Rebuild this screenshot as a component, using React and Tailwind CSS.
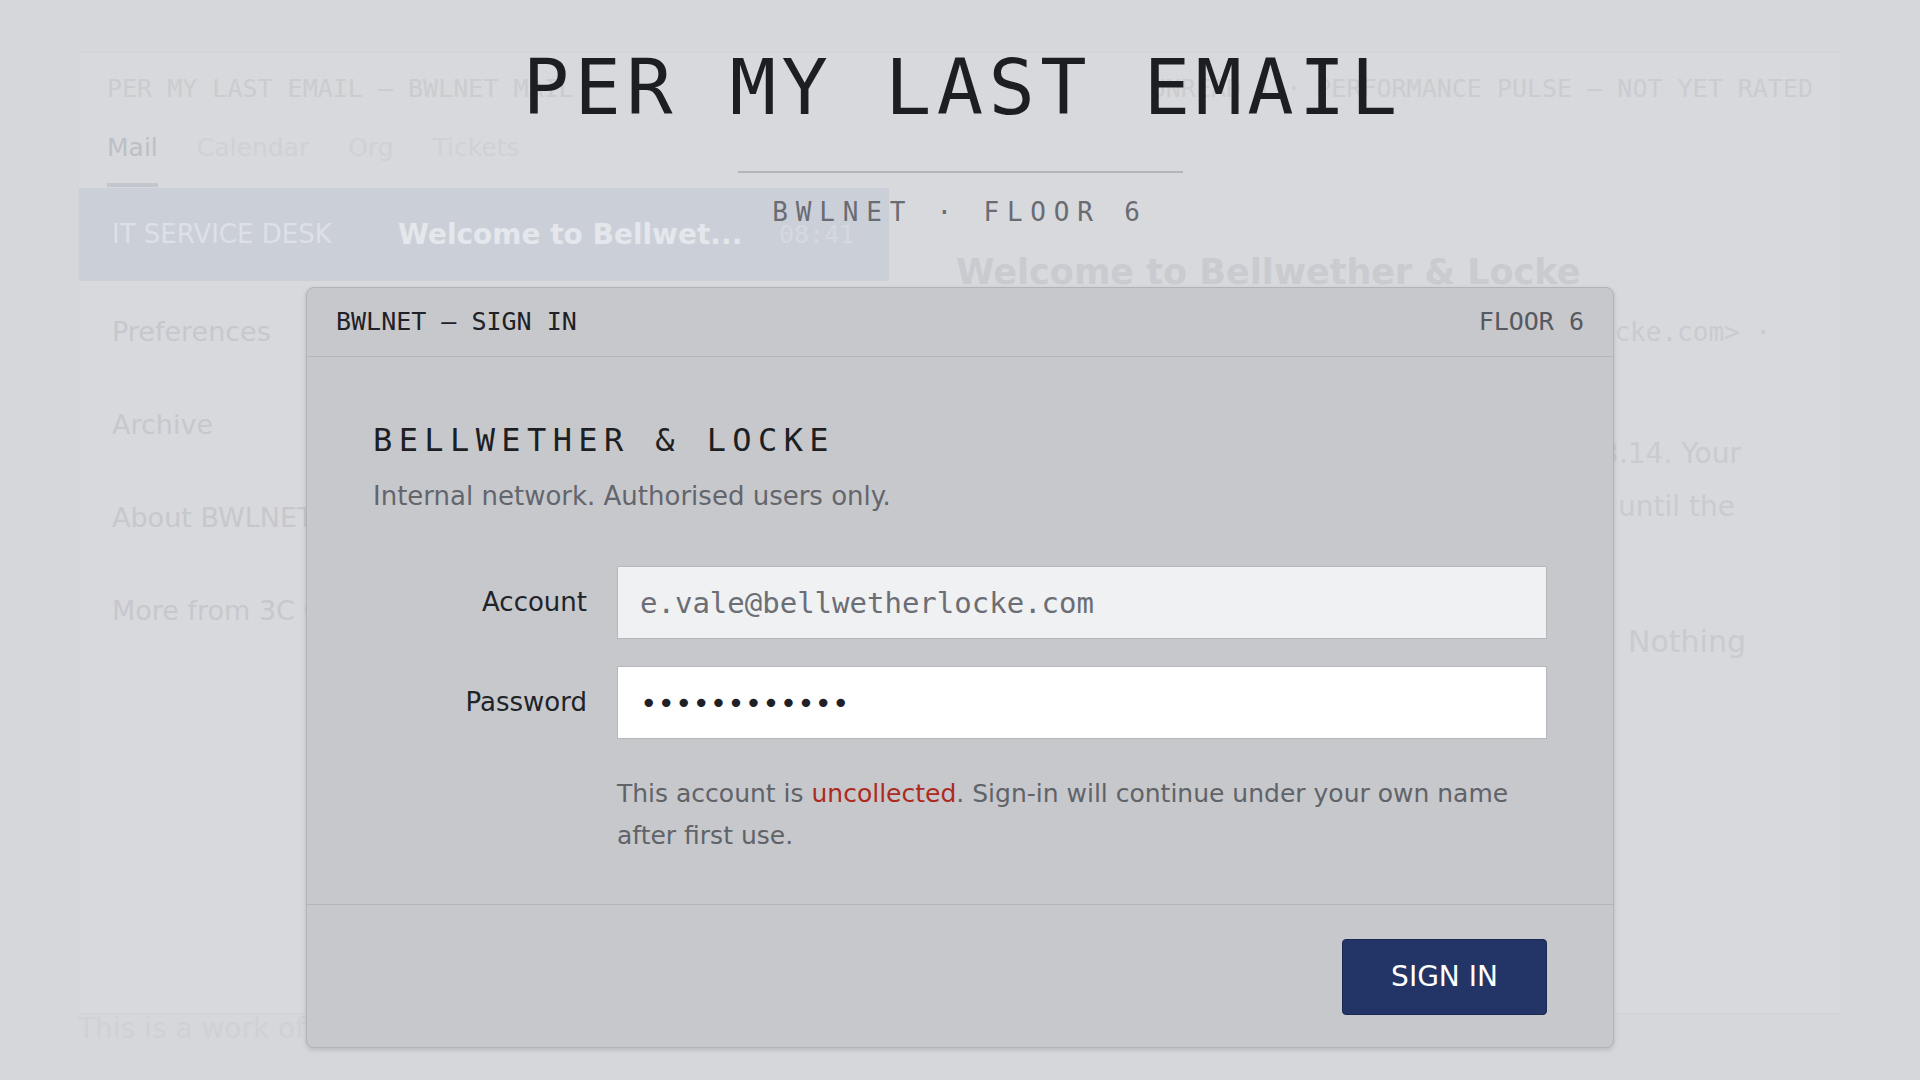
import React from 'react'

const mono = "font-['DejaVu_Sans_Mono',monospace]"
const sans = "font-['DejaVu_Sans',sans-serif]"

function Backdrop() {
  const tabs = ['Mail', 'Calendar', 'Org', 'Tickets']
  const folders = ['Preferences', 'Archive', 'About BWLNET', 'More from 3C Group']

  return (
    <div className="px-[78px] pt-[52px]">
      {/* App window, faded behind the dialog */}
      <div className="flex h-[962px] w-[1764px] flex-col border border-[#d3d4d8] bg-[#d8d9dd]">
        <header className="h-[135px] px-[28px] pt-[21px]">
          <div className={`flex items-center justify-between text-[25px] leading-[30px] text-[#cacccf] ${mono}`}>
            <span>PER MY LAST EMAIL — BWLNET MAIL</span>
            <span>UNREAD 1 · PERFORMANCE PULSE — NOT YET RATED</span>
          </div>
          <nav className={`mt-[29px] flex gap-[39px] text-[25px] leading-[30px] ${sans}`}>
            {tabs.map((t, i) => (
              <span
                key={t}
                className={
                  i === 0
                    ? 'border-b-[4px] border-[#c3c6cc] pb-[20px] text-[#bcbfc5]'
                    : 'pb-[24px] text-[#cfd1d5]'
                }
              >
                {t}
              </span>
            ))}
          </nav>
        </header>

        <div className="flex flex-1">
          {/* Message list */}
          <div className="w-[810px]">
            <div className="flex h-[93px] items-center bg-[#cbd0d8] pl-[33px]">
              <span className={`w-[286px] text-[26px] text-[#dde0e6] ${sans}`}>IT SERVICE DESK</span>
              <span className={`w-[381px] text-[28px] font-bold text-[#e4e7eb] ${sans}`}>Welcome to Bellwet...</span>
              <span className={`text-[25px] text-[#d5d9df] ${mono}`}>08:41</span>
            </div>
            <div className="pt-[5px]">
              {folders.map((f) => (
                <div key={f} className={`flex h-[93px] items-center pl-[33px] text-[27px] text-[#c6c8cd] ${sans}`}>
                  {f}
                </div>
              ))}
            </div>
          </div>

          {/* Reading pane */}
          <div className={`flex-1 pl-[67px] pt-[63px] ${sans}`}>
            <h2 className="text-[35px] font-bold leading-[42px] text-[#c9cbd0]">Welcome to Bellwether &amp; Locke</h2>
            <div className={`mt-[24px] w-[815px] text-right text-[26px] leading-[30px] text-[#c9cbd0] ${mono}`}>
              IT Service Desk &lt;servicedesk@bellwetherlocke.com&gt; ·
            </div>
            <div className="mt-[80px] text-[28px] leading-[53px] text-[#c9cbd0]">
              <div className="w-[785px] text-right">Your account was provisioned on 2024.03.14. Your</div>
              <div className="w-[779px] text-right">mailbox will stay in read-only mode until the</div>
              <div>first sign-in is complete.</div>
              <div className="mt-[29px] w-[790px] text-right">
                Keep this message for your records.{' '}
                <span className="ml-[6px] text-[30px]">Nothing</span>
              </div>
            </div>
          </div>
        </div>
      </div>
      <p className={`-mt-[1px] text-[28px] leading-[32px] text-[#cfd1d5] ${sans}`}>
        This is a work of fiction. Any resemblance to a real employer is intended.
      </p>
    </div>
  )
}

function SignInDialog() {
  return (
    <div className="mt-[62px] w-[1308px] overflow-hidden rounded-[8px] border border-[#b1b3b8] bg-[#c7c8cc] shadow-[0_2px_5px_rgba(0,0,0,0.14)]">
      <div className={`flex h-[69px] items-center justify-between border-b border-[#b4b6bb] px-[29px] text-[25px] ${mono}`}>
        <span className="text-[#1f2126]">BWLNET — SIGN IN</span>
        <span className="text-[#56595f]">FLOOR 6</span>
      </div>

      <div className="px-[66px] pt-[65px] pb-[47px]">
        <h3 className={`text-[32px] leading-[37px] tracking-[0.2em] text-[#1d1f24] ${mono}`}>BELLWETHER &amp; LOCKE</h3>
        <p className={`mt-[18px] text-[26px] leading-[39px] text-[#63666c] ${sans}`}>
          Internal network. Authorised users only.
        </p>

        <div className="mt-[50px] grid grid-cols-[214px_1fr] items-center gap-x-[30px] gap-y-[27px]">
          <label className={`text-right text-[26px] text-[#202328] ${sans}`}>Account</label>
          <input
            readOnly
            value="e.vale@bellwetherlocke.com"
            className={`h-[73px] w-full border border-[#b5b7bc] bg-[#f0f1f3] pl-[22px] text-[29px] text-[#6b6e75] outline-none ${mono}`}
          />
          <label className={`text-right text-[26px] text-[#202328] ${sans}`}>Password</label>
          <input
            readOnly
            type="password"
            value="bellwether14"
            className={`h-[73px] w-full border border-[#b5b7bc] bg-white pl-[22px] text-[29px] text-[#1f2126] outline-none ${mono}`}
          />
          <p className={`col-start-2 mt-[7px] text-[25px] leading-[42px] text-[#606368] ${sans}`}>
            This account is <span className="text-[#ad2a1f]">uncollected</span>. Sign-in will continue under your own name after first use.
          </p>
        </div>
      </div>

      <div className="flex justify-end border-t border-[#b4b6bb] px-[66px] pt-[34px] pb-[32px]">
        <button className={`h-[76px] w-[205px] rounded-[4px] border border-[#1b2a55] bg-[#233566] text-[28px] text-white ${sans}`}>
          SIGN IN
        </button>
      </div>
    </div>
  )
}

export default function App() {
  return (
    <div className="relative h-[1080px] overflow-hidden bg-[#d6d7db]">
      <Backdrop />

      {/* Overlay: title and dialog */}
      <div className="absolute inset-0 flex flex-col items-center pt-[49px]">
        <h1 className={`pl-[0.07em] text-[77px] leading-[77px] tracking-[0.07em] text-[#1c1e22] ${mono}`}>PER MY LAST EMAIL</h1>
        <div className="mt-[45px] h-[2px] w-[445px] bg-[#b3b5ba]" />
        <div className={`mt-[26px] text-[26px] leading-[26px] tracking-[0.3em] text-[#696c72] ${mono}`}>BWLNET · FLOOR 6</div>
        <SignInDialog />
      </div>
    </div>
  )
}
